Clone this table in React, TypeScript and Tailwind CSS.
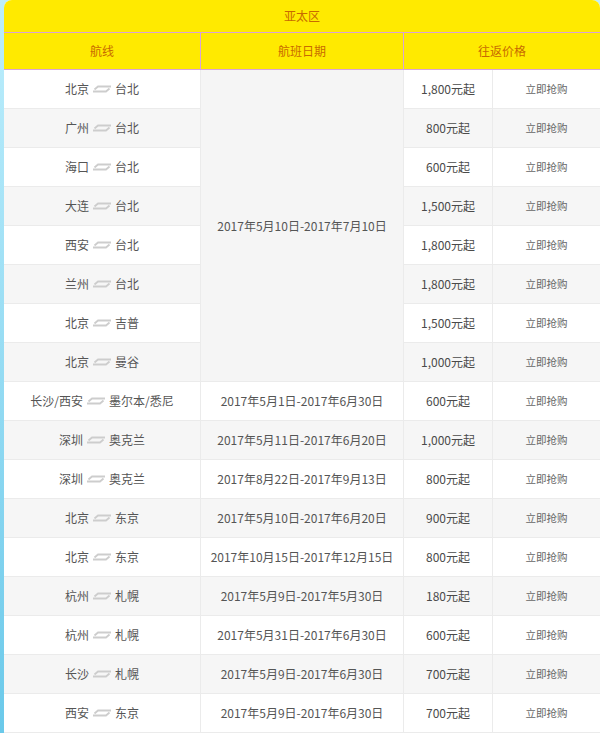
import React from "react";

type Row = { from: string; to: string; date?: string; price: string };

const rows: Row[] = [
  { from: "北京", to: "台北", price: "1,800元起" },
  { from: "广州", to: "台北", price: "800元起" },
  { from: "海口", to: "台北", price: "600元起" },
  { from: "大连", to: "台北", price: "1,500元起" },
  { from: "西安", to: "台北", price: "1,800元起" },
  { from: "兰州", to: "台北", price: "1,800元起" },
  { from: "北京", to: "吉普", price: "1,500元起" },
  { from: "北京", to: "曼谷", price: "1,000元起" },
  { from: "长沙/西安", to: "墨尔本/悉尼", date: "2017年5月1日-2017年6月30日", price: "600元起" },
  { from: "深圳", to: "奥克兰", date: "2017年5月11日-2017年6月20日", price: "1,000元起" },
  { from: "深圳", to: "奥克兰", date: "2017年8月22日-2017年9月13日", price: "800元起" },
  { from: "北京", to: "东京", date: "2017年5月10日-2017年6月20日", price: "900元起" },
  { from: "北京", to: "东京", date: "2017年10月15日-2017年12月15日", price: "800元起" },
  { from: "杭州", to: "札幌", date: "2017年5月9日-2017年5月30日", price: "180元起" },
  { from: "杭州", to: "札幌", date: "2017年5月31日-2017年6月30日", price: "600元起" },
  { from: "长沙", to: "札幌", date: "2017年5月9日-2017年6月30日", price: "700元起" },
  { from: "西安", to: "东京", date: "2017年5月9日-2017年6月30日", price: "700元起" },
];

function Swap() {
  return (
    <svg width="20" height="10" viewBox="0 0 20 10" fill="none" stroke="#cdcdcd" strokeWidth="1.8" className="mx-[3px]">
      <path d="M19 2.5H6L2.5 5.5" />
      <path d="M1 7.5h13L17.5 4.5" />
    </svg>
  );
}

const cell = "h-[39px] flex items-center justify-center border-b border-r border-[#ebebeb]";

export default function App() {
  return (
    <div className="min-h-[733px] bg-gradient-to-b from-[#bdeefc] to-[#6ac9ea] pl-[4px] font-['Noto_Sans_CJK_SC','Noto_Sans',sans-serif] text-[12px] text-[#555]">
      <div className="grid grid-cols-[197px_203px_89px_107px] overflow-hidden rounded-t-[8px] bg-white">
        <div className="col-span-4 flex h-[33px] items-center justify-center border-b border-[#d9a3d9] bg-[#ffea00] text-[#c86a00]">
          亚太区
        </div>
        <div className="flex h-[37px] items-center justify-center border-b border-r border-[#d9a3d9] bg-[#ffea00] text-[#c86a00]">航线</div>
        <div className="flex h-[37px] items-center justify-center border-b border-r border-[#d9a3d9] bg-[#ffea00] text-[#c86a00]">航班日期</div>
        <div className="col-span-2 flex h-[37px] items-center justify-center border-b border-[#d9a3d9] bg-[#ffea00] text-[#c86a00]">往返价格</div>

        {rows.map((r, i) => {
          const bg = i % 2 === 1 ? "bg-[#f6f6f6]" : "bg-white";
          return (
            <React.Fragment key={i}>
              <div className={`${cell} ${bg}`}>
                <span>{r.from}</span>
                <Swap />
                <span>{r.to}</span>
              </div>
              {i === 0 && (
                <div className="row-span-8 flex items-center justify-center border-b border-r border-[#ebebeb] bg-[#f5f5f5]">
                  2017年5月10日-2017年7月10日
                </div>
              )}
              {r.date && <div className={`${cell} ${bg}`}>{r.date}</div>}
              <div className={`${cell} ${bg} text-[#4a4a4a]`}>{r.price}</div>
              <div className={`${cell} ${bg} border-r-0 text-[10.5px] text-[#666]`}>立即抢购</div>
            </React.Fragment>
          );
        })}
      </div>
    </div>
  );
}
